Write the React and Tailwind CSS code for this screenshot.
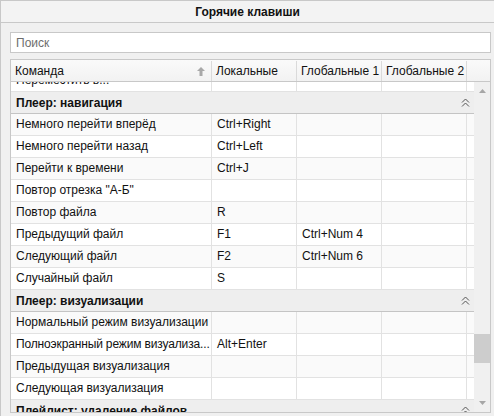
const font = { fontFamily: '"Liberation Sans", "DejaVu Sans", sans-serif' }

const sections = [
  {
    title: 'Плеер: навигация',
    rows: [
      ['Немного перейти вперёд', 'Ctrl+Right', '', ''],
      ['Немного перейти назад', 'Ctrl+Left', '', ''],
      ['Перейти к времени', 'Ctrl+J', '', ''],
      ['Повтор отрезка "А-Б"', '', '', ''],
      ['Повтор файла', 'R', '', ''],
      ['Предыдущий файл', 'F1', 'Ctrl+Num 4', ''],
      ['Следующий файл', 'F2', 'Ctrl+Num 6', ''],
      ['Случайный файл', 'S', '', ''],
    ],
  },
  {
    title: 'Плеер: визуализации',
    rows: [
      ['Нормальный режим визуализации', '', '', ''],
      ['Полноэкранный режим визуализа...', 'Alt+Enter', '', ''],
      ['Предыдущая визуализация', '', '', ''],
      ['Следующая визуализация', '', '', ''],
    ],
  },
  { title: 'Плейлист: удаление файлов', rows: [] },
]

function CollapseIcon() {
  return (
    <svg width="9" height="9" viewBox="0 0 9 9" className="shrink-0">
      <path d="M1 4.5 L4.5 1 L8 4.5 M1 8.5 L4.5 5 L8 8.5" fill="none" stroke="#555" strokeWidth="1" />
    </svg>
  )
}

function SortArrow() {
  return (
    <svg width="8" height="9" viewBox="0 0 8 9">
      <path d="M4 0 L8 4 L5.5 4 L5.5 9 L2.5 9 L2.5 4 L0 4 Z" fill="#a8a8a8" />
    </svg>
  )
}

function Row({ cells, striped }) {
  // long command names are pre-shortened with "..." and need a hair less spacing to fit
  const tight = cells[0].endsWith('...') && cells[0].length > 20
  return (
    <div className={`flex h-[22px] border-b border-[#e2e2e2] whitespace-nowrap ${striped ? 'bg-[#fafafa]' : 'bg-white'}`}>
      <div className={`w-[201px] shrink-0 border-r border-[#e2e2e2] pl-[5px] leading-[21px] overflow-hidden ${tight ? 'tracking-[-0.15px]' : ''}`}>{cells[0]}</div>
      <div className="w-[85px] shrink-0 border-r border-[#e2e2e2] pl-[5px] leading-[21px] overflow-hidden">{cells[1]}</div>
      <div className="w-[85px] shrink-0 border-r border-[#e2e2e2] pl-[5px] leading-[21px] overflow-hidden">{cells[2]}</div>
      <div className="w-[85px] shrink-0 border-r border-[#e2e2e2] pl-[5px] leading-[21px] overflow-hidden">{cells[3]}</div>
      <div className="flex-1" />
    </div>
  )
}

function GroupRow({ title }) {
  return (
    <div className="flex h-[22px] items-center justify-between bg-[#eeeeee] border-b border-[#c4c4c4] pl-[5px] pr-[4px] font-bold whitespace-nowrap">
      <span>{title}</span>
      <CollapseIcon />
    </div>
  )
}

export default function App() {
  return (
    <div className="w-[494px] h-[416px] bg-[#f0f0f0] border-t border-l border-[#c8c8c8] flex flex-col text-[12px] text-[#111] overflow-hidden" style={font}>
      <div className="h-[22px] shrink-0 border-b border-[#c8c8c8] flex items-center justify-center font-bold bg-[#f3f3f3]">
        Горячие клавиши
      </div>

      <div className="flex-1 flex flex-col pl-[9px] pr-[3px] pt-[9px] pb-[3px] min-h-0">
        <div className="h-[21px] shrink-0 bg-white border border-[#c8c8c8] pl-[5px] flex items-center text-[#6d6d6d]">
          Поиск
        </div>

        <div className="mt-[6px] flex-1 min-h-0 bg-white border border-[#c8c8c8] flex flex-col">
          <div className="flex h-[22px] shrink-0 border-b border-[#c8c8c8] bg-gradient-to-b from-[#fafafa] to-[#f2f2f2] whitespace-nowrap pt-[1px]">
            <div className="w-[201px] shrink-0 border-r border-[#dadada] pl-[4px] pr-[6px] flex items-center justify-between">
              <span>Команда</span>
              <SortArrow />
            </div>
            <div className="w-[85px] shrink-0 border-r border-[#dadada] pl-[4px] flex items-center overflow-hidden">Локальные</div>
            <div className="w-[85px] shrink-0 border-r border-[#dadada] pl-[4px] flex items-center overflow-hidden">Глобальные 1</div>
            <div className="w-[85px] shrink-0 border-r border-[#dadada] pl-[4px] flex items-center overflow-hidden">Глобальные 2</div>
            <div className="flex-1" />
          </div>

          <div className="flex flex-1 min-h-0">
            <div className="flex-1 overflow-hidden">
              <div className="-mt-[12px]">
                <Row cells={['Переместить в...', '', '', '']} striped={false} />
                {sections.map((s) => (
                  <div key={s.title}>
                    <GroupRow title={s.title} />
                    {s.rows.map((r, i) => (
                      <Row key={r[0]} cells={r} striped={i % 2 === 0} />
                    ))}
                  </div>
                ))}
              </div>
            </div>
            <div className="w-[16px] shrink-0 bg-[#f0f0f0] flex flex-col items-center">
              <svg width="7" height="4" viewBox="0 0 7 4" className="mt-[7px]">
                <path d="M0 4 L3.5 0 L7 4 Z" fill="#a6a6a6" />
              </svg>
              <div className="flex-1 w-full flex flex-col justify-end">
                <div className="h-[29px] w-full bg-[#cdcdcd] mb-[38px]" />
              </div>
              <svg width="7" height="4" viewBox="0 0 7 4" className="mb-[7px]">
                <path d="M0 0 L3.5 4 L7 0 Z" fill="#a6a6a6" />
              </svg>
            </div>
          </div>
        </div>
      </div>
    </div>
  )
}
